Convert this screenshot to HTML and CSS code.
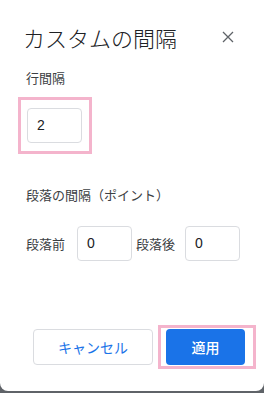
FILE: index.html
```html
<!DOCTYPE html>
<html lang="ja">
<head>
    <meta charset="UTF-8">
    <title>カスタムの間隔</title>
    <link rel="stylesheet" href="styles.css">
</head>
<body>
<div class="dialog">
    <div class="head">
        <h1 class="title">カスタムの間隔</h1>
        <span class="close">
            <svg width="12" height="12" viewBox="0 0 12 12"><path d="M1 1L11 11M11 1L1 11" stroke="#5f6368" stroke-width="1.3" fill="none"/></svg>
        </span>
    </div>
    <div class="label">行間隔</div>
    <div class="mark mark-line">
        <div class="field">2</div>
    </div>
    <div class="label label-para">段落の間隔（ポイント）</div>
    <div class="row">
        <span class="row-label">段落前</span>
        <div class="field">0</div>
        <span class="row-label">段落後</span>
        <div class="field">0</div>
    </div>
    <div class="buttons">
        <button class="btn btn-cancel">キャンセル</button>
        <div class="mark mark-btn">
            <button class="btn btn-apply">適用</button>
        </div>
    </div>
</div>
</body>
</html>
```

FILE: styles.css
```css
html, body {
    margin: 0;
    padding: 0;
}

body {
    width: 264px;
    height: 393px;
    background-color: #5f6368;
    font-family: "Noto Sans CJK JP", "Noto Sans", sans-serif;
    overflow: hidden;
}

div.dialog {
    box-sizing: border-box;
    height: 391px;
    background-color: #fff;
    border-radius: 0 0 8px 8px;
    padding: 23px 0 0 26px;
}

div.head {
    display: flex;
    align-items: center;
    height: 28px;
    margin-left: -3px;
}

h1.title {
    margin: 0;
    font-size: 22px;
    font-weight: 300;
    line-height: 28px;
    color: #202124;
    letter-spacing: 0;
}

span.close {
    display: flex;
    margin-left: auto;
    margin-right: 30px;
    margin-top: 0;
}

div.label {
    margin-top: 18px;
    font-size: 13px;
    line-height: 18px;
    color: #3c4043;
}

div.label-para {
    margin-top: 32px;
}

div.mark {
    border: 3px solid #f4b4cc;
}

div.mark-line {
    box-sizing: border-box;
    width: 74px;
    height: 57px;
    margin: 10px 0 0 -8px;
    padding: 8px 0 0 6px;
}

div.field {
    box-sizing: border-box;
    width: 55px;
    height: 35px;
    border: 1px solid #dadce0;
    border-radius: 4px;
    padding-left: 9px;
    font-family: "Liberation Sans", Arial, sans-serif;
    font-size: 14px;
    line-height: 33px;
    color: #202124;
}

div.row {
    display: flex;
    align-items: center;
    margin-top: 22px;
}

span.row-label {
    font-size: 13px;
    color: #3c4043;
    margin-right: 12px;
}

div.row div.field + span.row-label {
    margin-left: 4px;
    margin-right: 10px;
}

div.buttons {
    display: flex;
    align-items: center;
    margin-top: 64px;
    margin-left: 7px;
}

button.btn {
    box-sizing: border-box;
    height: 36px;
    border-radius: 4px;
    font-family: "Noto Sans CJK JP", sans-serif;
    font-size: 14px;
    cursor: pointer;
}

button.btn-cancel {
    width: 120px;
    background-color: #fff;
    border: 1px solid #dadce0;
    color: #1a73e8;
}

div.mark-btn {
    margin-left: 5px;
    padding: 1px 8px 1px 5px;
    display: flex;
}

button.btn-apply {
    width: 79px;
    background-color: #1a73e8;
    border: none;
    color: #fff;
    font-weight: 500;
}
```
